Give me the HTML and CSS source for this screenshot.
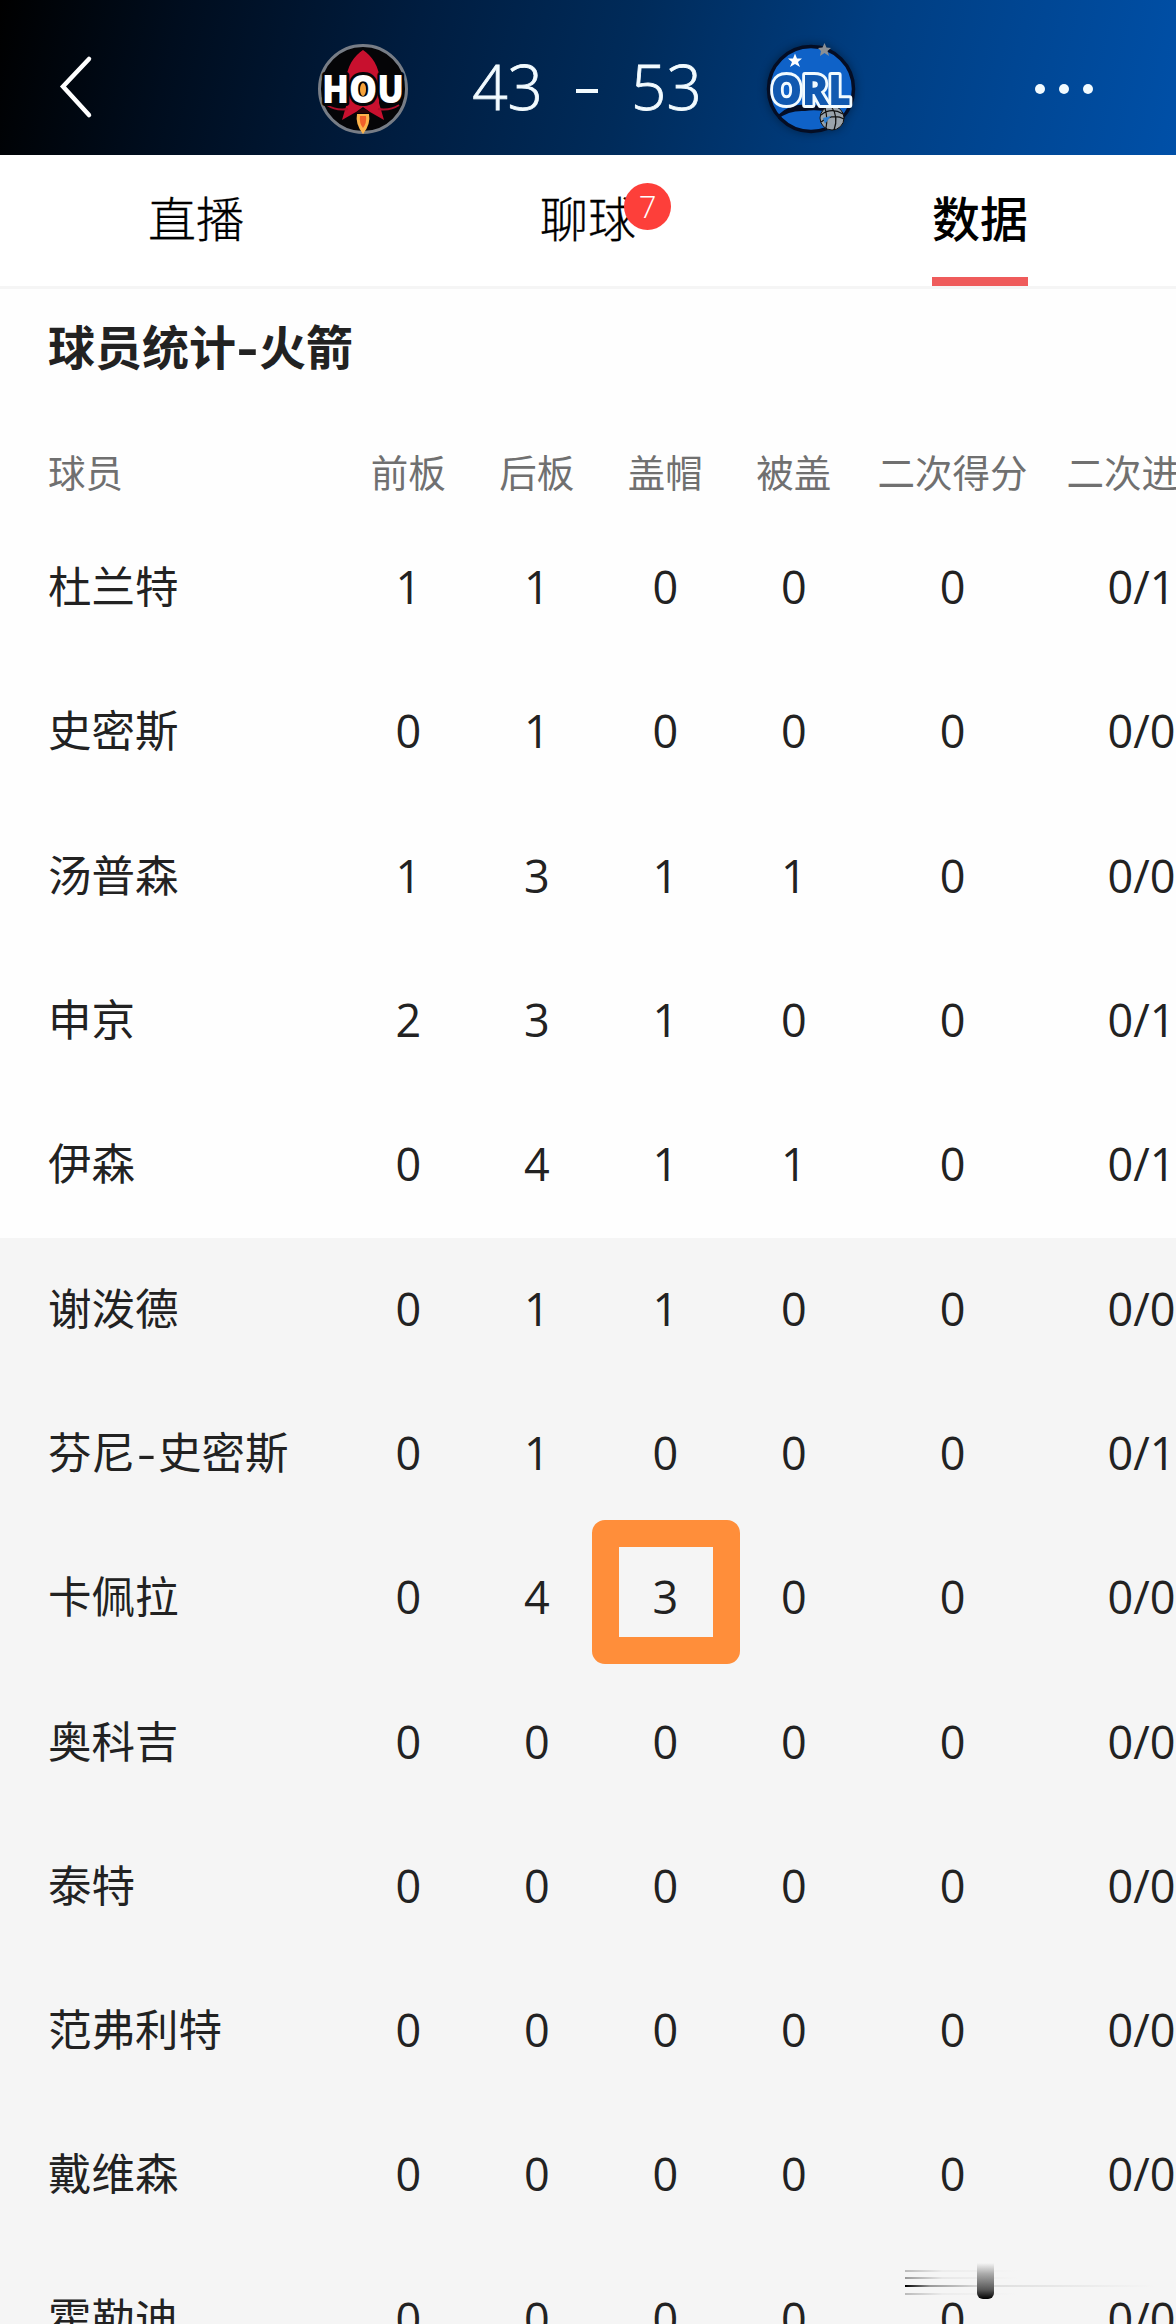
FILE: index.html
```html
<!DOCTYPE html>
<html lang="zh-CN">
  <head>
    <meta charset="UTF-8" />
    <meta name="viewport" content="width=device-width, initial-scale=1.0" />
    <title>球员统计</title>
    <link rel="stylesheet" href="styles.css">
  </head>
  <body>
    <header>
      <svg class="back" viewBox="0 0 36 64">
        <path d="M30 4 L4 31.500 L30 60" />
      </svg>
      <div class="match">
        <svg class="logo" viewBox="0 0 100 100">
          <circle cx="50" cy="50" r="43.500" fill="#050507" stroke="#777d86" stroke-width="3" />
          <path d="M50 11 C42 16 33 27 33 44 L34 64 L29 81 L43 73 L50 68 L57 73 L71 81 L66 64 L67 44 C67 27 58 16 50 11Z" fill="#c8102e" />
          <path d="M14 66 Q23 72 35 70 M86 66 Q77 72 65 70" fill="none" stroke="#b00f2b" stroke-width="2" />
          <path d="M43 74 Q50 66 57 74Z" fill="#2b0508" />
          <path d="M44 75 H56 Q58 85 50 95 Q42 85 44 75Z" fill="#fdb44b" />
          <path d="M47 77 H53 Q54 84 50 89 Q46 84 47 77Z" fill="#f0602a" />
          <text class="logo-hou" x="50" y="64" textLength="82" lengthAdjust="spacingAndGlyphs">HOU</text>
          <ellipse cx="50" cy="50.500" rx="3" ry="6.500" fill="#f5a33c" />
        </svg>
        <div class="score">
          <span>43</span>
          <i class="dash"></i>
          <span>53</span>
        </div>
        <svg class="logo logo-shadow" viewBox="0 0 100 100">
          <circle cx="50" cy="50" r="42.500" fill="#0f62c8" stroke="#040d24" stroke-width="3.500" />
          <path d="M17 76 Q30 63 50 66 Q66 66 76 74 Q56 70 44 72 Q28 71 17 80Z" fill="#040d24" />
          <circle cx="71" cy="79" r="12" fill="#9aa3ab" stroke="#111" stroke-width="1" />
          <path d="M60 76 Q70 68 82 75 M60 83 Q72 74 83 80 M70 67 Q78 78 73 91 M64 69 Q67 80 65 89" fill="none" stroke="#111" stroke-width="1.200" />
          <path d="M62 79 L70 77 L64 85Z" fill="#2f7fd0" />
          <path d="M34 14.500 L36 19.500 L41 19.500 L37 23 L39 28 L34 25 L29 28 L31 23 L27 19.500 L32 19.500Z" fill="#fff" />
          <path d="M63.500 4 L65.500 8.500 L70 9 L66.500 12 L68 17 L63.500 14 L59 17 L60 12 L57 9 L61.500 8.500Z" fill="#8b8f94" />
          <text class="logo-orl" x="50" y="66" textLength="80" lengthAdjust="spacingAndGlyphs">ORL</text>
        </svg>
      </div>
      <div class="more"><i></i><i></i><i></i></div>
    </header>

    <nav class="tabs">
      <div class="tab"><span>直播</span></div>
      <div class="tab"><span>聊球<b class="badge">7</b></span></div>
      <div class="tab active"><span>数据</span></div>
    </nav>

    <main>
      <h1>球员统计<span class="hyphen">-</span>火箭</h1>
      <table>
        <colgroup>
          <col class="col-name" />
          <col class="col-stat" span="4" />
          <col class="col-wide" span="2" />
        </colgroup>
        <thead>
          <tr><th>球员</th><th>前板</th><th>后板</th><th>盖帽</th><th>被盖</th><th>二次得分</th><th>二次进攻</th></tr>
        </thead>
        <tbody>
          <tr><td>杜兰特</td><td>1</td><td>1</td><td>0</td><td>0</td><td>0</td><td>0/1</td></tr>
          <tr><td>史密斯</td><td>0</td><td>1</td><td>0</td><td>0</td><td>0</td><td>0/0</td></tr>
          <tr><td>汤普森</td><td>1</td><td>3</td><td>1</td><td>1</td><td>0</td><td>0/0</td></tr>
          <tr><td>申京</td><td>2</td><td>3</td><td>1</td><td>0</td><td>0</td><td>0/1</td></tr>
          <tr><td>伊森</td><td>0</td><td>4</td><td>1</td><td>1</td><td>0</td><td>0/1</td></tr>
        </tbody>
        <tbody class="bench">
          <tr><td>谢泼德</td><td>0</td><td>1</td><td>1</td><td>0</td><td>0</td><td>0/0</td></tr>
          <tr><td>芬尼<span class="hyphen">-</span>史密斯</td><td>0</td><td>1</td><td>0</td><td>0</td><td>0</td><td>0/1</td></tr>
          <tr><td>卡佩拉</td><td>0</td><td>4</td><td class="marked">3</td><td>0</td><td>0</td><td>0/0</td></tr>
          <tr><td>奥科吉</td><td>0</td><td>0</td><td>0</td><td>0</td><td>0</td><td>0/0</td></tr>
          <tr><td>泰特</td><td>0</td><td>0</td><td>0</td><td>0</td><td>0</td><td>0/0</td></tr>
          <tr><td>范弗利特</td><td>0</td><td>0</td><td>0</td><td>0</td><td>0</td><td>0/0</td></tr>
          <tr><td>戴维森</td><td>0</td><td>0</td><td>0</td><td>0</td><td>0</td><td>0/0</td></tr>
          <tr><td>霍勒迪</td><td>0</td><td>0</td><td>0</td><td>0</td><td>0</td><td>0/0</td></tr>
        </tbody>
      </table>
    </main>

    <!-- faded smear in the bottom right corner -->
    <div class="smear"><i class="smear-bar"></i></div>
  </body>
</html>
```

FILE: styles.css
```css
* {
  box-sizing: border-box;
}

body {
  position: relative;
  width: 1176px;
  height: 2324px;
  margin: 0;
  overflow: hidden;
  background-color: #fefefe;
  color: #222;
  font-family: "Open Sans", "Noto Sans CJK SC", sans-serif;
}

header {
  display: grid;
  grid-template-columns: 300px 1fr 300px;
  align-items: center;
  height: 155px;
  padding-top: 22px;
  background: linear-gradient(103deg, #000 0%, #000d1e 15%, #001d40 35%, #002b5a 53%, #003e82 73%, #0050a8 100%);
}

.back {
  width: 36px;
  height: 64px;
  margin-left: 59px;
  margin-top: -4px;
}

.back path {
  fill: none;
  stroke: #fff;
  stroke-width: 4.5;
  stroke-linecap: round;
}

.match {
  display: flex;
  align-items: center;
  justify-content: space-between;
  padding: 0 15px 0 13px;
}

.logo {
  width: 100px;
  height: 100px;
}

.logo-shadow {
  filter: drop-shadow(0 0 5px rgba(0, 0, 0, 0.4));
}

.logo-hou,
.logo-orl {
  font-family: "Open Sans", sans-serif;
  font-weight: 800;
  text-anchor: middle;
  paint-order: stroke;
  stroke-linejoin: round;
}

.logo-hou {
  font-size: 39px;
  fill: #fff;
  stroke: #050507;
  stroke-width: 6px;
}

.logo-orl {
  font-size: 42px;
  fill: #1159b0;
  stroke: #f2fbff;
  stroke-width: 6px;
}

.score {
  display: flex;
  align-items: center;
  gap: 33px;
  margin-top: -5px;
  color: #f2fbff;
  font-size: 62px;
  font-weight: 300;
  line-height: 1;
  -webkit-text-stroke: 0.8px #f2fbff;
}

.dash {
  width: 22px;
  height: 4px;
  margin-top: 9px;
  background-color: #f2fbff;
}

.more {
  display: flex;
  gap: 14px;
  margin-left: 159px;
}

.more i {
  width: 10px;
  height: 10px;
  border-radius: 50%;
  background-color: #f2fbff;
}

.tabs {
  display: grid;
  grid-template-columns: repeat(3, 1fr);
  height: 134px;
  background-color: #fff;
  border-bottom: 3px solid #f5f5f5;
  color: #000;
  font-size: 48px;
  font-weight: 300;
}

.tab {
  display: flex;
  justify-content: center;
}

.tab span {
  position: relative;
  height: 131px;
  line-height: 128px;
  -webkit-text-stroke: 0.3px #000;
}

.tab.active span {
  font-weight: 500;
  border-bottom: 9px solid #ef5b5b;
  -webkit-text-stroke: 0;
}

.badge {
  position: absolute;
  top: 28px;
  left: 84px;
  width: 47px;
  height: 47px;
  border-radius: 50%;
  background-color: #fd3f3a;
  color: #fff;
  font-size: 31px;
  font-weight: 300;
  line-height: 46px;
  text-align: center;
  -webkit-text-stroke: 0;
}

h1 {
  height: 121px;
  margin: 0;
  padding-left: 48px;
  font-size: 47px;
  font-weight: 700;
  line-height: 116px;
}

.hyphen {
  display: inline-block;
  width: 23px;
  text-align: center;
  transform: scaleX(1.35);
}

table {
  width: 1236px;
  table-layout: fixed;
  border-collapse: collapse;
  font-size: 45px;
}

.col-name {
  width: 344px;
}

.col-stat {
  width: 128.5px;
}

.col-wide {
  width: 189px;
}

th,
td {
  height: 144.3px;
  padding: 0 0 4px;
  text-align: center;
  white-space: nowrap;
  line-height: 60px;
}

th {
  height: 107px;
  padding: 19px 0 0;
  color: #707070;
  font-size: 37.5px;
  font-weight: 400;
}

th:first-child,
td:first-child {
  padding-left: 48px;
  text-align: left;
}

td:first-child {
  font-size: 43.5px;
}

.bench {
  background-color: #f5f5f5;
}

.marked {
  position: relative;
}

.marked::after {
  content: "";
  position: absolute;
  top: -7px;
  left: -9px;
  box-sizing: border-box;
  width: 148px;
  height: 144px;
  border: 27px solid #ff8e3a;
  border-radius: 13px;
}

.smear {
  position: absolute;
  left: 905px;
  top: 2263px;
  width: 250px;
  height: 37px;
  background:
    linear-gradient(90deg, #bbb, rgba(200, 200, 200, 0.2) 15%, transparent 45%) 0 7px / 100% 2px no-repeat,
    linear-gradient(90deg, #999, rgba(200, 200, 200, 0.3) 15%, transparent 45%) 0 14px / 100% 2px no-repeat,
    linear-gradient(90deg, #000, #999 10%, #ddd 30%, #eaeaea 70%, transparent) 0 22px / 100% 2px no-repeat,
    linear-gradient(90deg, #bbb, rgba(200, 200, 200, 0.2) 15%, transparent 45%) 0 30px / 100% 2px no-repeat;
}

.smear-bar {
  position: absolute;
  left: 72px;
  top: 0;
  width: 17px;
  height: 36px;
  border-radius: 0 0 6px 6px;
  background: linear-gradient(#f5f5f5, #aaa 30%, #555 75%, #000);
  filter: blur(0.6px);
}
```
